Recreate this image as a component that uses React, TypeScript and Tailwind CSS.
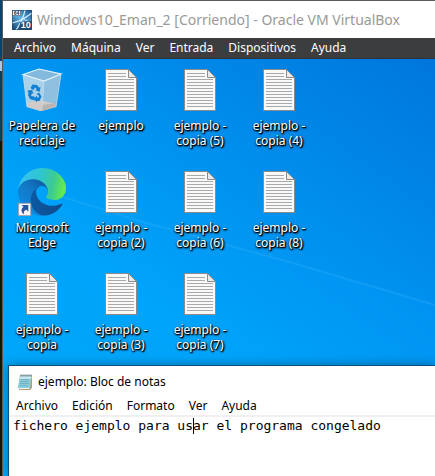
const hostMenu = ["Archivo", "Máquina", "Ver", "Entrada", "Dispositivos", "Ayuda"];
const notepadMenu = ["Archivo", "Edición", "Formato", "Ver", "Ayuda"];

type Kind = "bin" | "edge" | "text";
const icons: { kind: Kind; lines: string[] }[] = [
  { kind: "bin", lines: ["Papelera de", "reciclaje"] },
  { kind: "text", lines: ["ejemplo"] },
  { kind: "text", lines: ["ejemplo -", "copia (5)"] },
  { kind: "text", lines: ["ejemplo -", "copia (4)"] },
  { kind: "edge", lines: ["Microsoft", "Edge"] },
  { kind: "text", lines: ["ejemplo -", "copia (2)"] },
  { kind: "text", lines: ["ejemplo -", "copia (6)"] },
  { kind: "text", lines: ["ejemplo -", "copia (8)"] },
  { kind: "text", lines: ["ejemplo -", "copia"] },
  { kind: "text", lines: ["ejemplo -", "copia (3)"] },
  { kind: "text", lines: ["ejemplo -", "copia (7)"] },
];

function TextFileIcon() {
  return (
    <svg className="size-12" viewBox="0 0 48 48" aria-hidden="true">
      <path d="M8.5 3.5h23l8 8v33h-31z" fill="#f9f9f9" stroke="#8b8b8b" />
      <path d="M31.5 3.5v8h8z" fill="#e9eaec" stroke="#8b8b8b" />
      <path d="M11 7.5h18M11 10.5h18" stroke="#a9a9a9" />
      <path
        d="M11 13.5h26M11 16.5h26M11 19.5h26M11 22.5h26M11 25.5h26M11 28.5h26M11 31.5h26M11 34.5h26M11 37.5h26M11 40.5h26"
        stroke="#a9a9a9"
      />
    </svg>
  );
}

function BinIcon() {
  return (
    <svg className="size-12" viewBox="0 0 48 48" aria-hidden="true">
      <path d="M5 8.500 21 3l22 5-5 33-16 4-13-4z" fill="#a5cfe9" />
      <path d="M5 8.500 21 3l22 5-17 7z" fill="#82b9dc" />
      <path d="M26 15 43 8l-5 33-14 4z" fill="#8fc0df" />
      <path d="M5 8.500 26 15l-2 30-15-4z" fill="#a9d1ea" />
      <path d="M9 37l12-3 17 4-.5 3L23 45 9 41z" fill="#d0cbc9" />
      <path d="M24 39l14-2-.5 4L23.500 45z" fill="#b9b3b2" />
      <path d="M5 8.500 21 3l22 5-17 7z" fill="none" stroke="#e4f2fa" strokeWidth="1.200" />
      <path d="M5 9l4 32M43 9l-5 32M26 15l-2 29" fill="none" stroke="#c9e3f2" strokeWidth=".6" />
      <g fill="#1180d3">
        <path d="M12.500 22l2-3.500 4.500.5 2 2.500 1.500-.5-.8 4.700-4.500-1.500 1.500-1-1.500-2-2 3z" />
        <path d="M9.500 24.500l4.500-.5 1.500 4-1.500-.7-1 2.700 3.500.5v4l-4.500-1.500-2-4 .5-2z" />
        <path d="M21 26.500l2.500 4-2 4.500h-2.500v1.500l-3.500-4 3.500-2.700v1.700h1.500l.7-1.500-2.500-2z" />
      </g>
    </svg>
  );
}

function EdgeIcon() {
  return (
    <svg className="size-12" viewBox="0 0 256 256" aria-hidden="true">
      <defs>
        <linearGradient id="edgeNavy" x1="63" x2="241" y1="178" y2="178" gradientUnits="userSpaceOnUse">
          <stop offset="0" stopColor="#0c59a4" />
          <stop offset="1" stopColor="#114a8b" />
        </linearGradient>
        <linearGradient id="edgeBlue" x1="150" x2="45" y1="95" y2="212" gradientUnits="userSpaceOnUse">
          <stop offset="0" stopColor="#0f5fa8" />
          <stop offset=".4" stopColor="#1277c4" />
          <stop offset="1" stopColor="#0f86dc" />
        </linearGradient>
        <linearGradient id="edgeGreen" x1="10" x2="245" y1="60" y2="105" gradientUnits="userSpaceOnUse">
          <stop offset="0" stopColor="#35c1f1" />
          <stop offset=".45" stopColor="#2fc6cf" />
          <stop offset=".75" stopColor="#3ccb91" />
          <stop offset="1" stopColor="#66eb4e" />
        </linearGradient>
      </defs>
      <path
        fill="url(#edgeNavy)"
        d="M231 190.500c-3.400 1.800-6.900 3.400-10.500 4.700a101.500 101.500 0 0 1-35.900 6.500c-47.300 0-88.500-32.500-88.500-74.300 0-11.900 6.600-21.900 16.300-27.200-42.800 1.800-53.800 46.400-53.800 72.500 0 73.900 68.100 81.400 82.800 81.400 7.900 0 19.800-2.300 27-4.600l1.300-.4a128.300 128.300 0 0 0 66.600-52.800 4 4 0 0 0-5.300-5.800z"
      />
      <path
        fill="url(#edgeBlue)"
        d="M105.700 241.400a79.200 79.200 0 0 1-22.700-21.300 80.700 80.700 0 0 1 29.500-120c3.100-1.500 8.500-4.100 15.600-4a32.400 32.400 0 0 1 25.700 13 31.900 31.900 0 0 1 6.300 18.700c0-.2 24.500-79.600-80-79.600-43.900 0-80 41.600-80 78.200a130.200 130.200 0 0 0 12.100 56 128 128 0 0 0 156.400 67 75.500 75.500 0 0 1-62.800-8z"
      />
      <path
        fill="url(#edgeGreen)"
        d="M152.300 148.900c-.8 1-3.300 2.500-3.300 5.700 0 2.600 1.700 5.100 4.700 7.200 14.400 10 41.500 8.700 41.600 8.700a59.600 59.600 0 0 0 30.300-8.300 61.400 61.400 0 0 0 30.400-52.900c.3-22.400-8-37.300-11.300-43.900C223.500 23.900 177.700 0 128 0A128 128 0 0 0 0 126.200c.5-36.500 36.800-66 80-66 3.500 0 23.500.3 42 10 16.300 8.600 24.900 18.900 30.800 29.200 6.200 10.700 7.300 24.100 7.300 29.500s-2.700 13.300-7.800 20z"
      />
      <rect x="2" y="188" width="66" height="66" fill="#f6f6f6" stroke="#9a9a9a" strokeWidth="4" />
      <path fill="#2257a0" d="M19 197h36v36l-11-10c-12 5-15 14-12 25-17-12-17-29-3-41z" />
    </svg>
  );
}

function Windows10Icon() {
  return (
    <svg className="size-5 shrink-0" viewBox="0 0 20 20" aria-hidden="true">
      <defs>
        <linearGradient id="vmSky" x1="0" y1="1" x2="1" y2="0">
          <stop offset="0" stopColor="#123a60" />
          <stop offset=".5" stopColor="#5fb0e2" />
          <stop offset="1" stopColor="#1b4f82" />
        </linearGradient>
      </defs>
      <rect width="20" height="20" fill="url(#vmSky)" />
      <path d="M0 13C6 12 12 9 20 3M13 0C12 6 9 13 4 20" fill="none" stroke="#d6f1ff" strokeWidth="1.200" />
      <path d="M9 8l11 5" stroke="#c7e9fb" strokeWidth=".8" />
      <path d="M8.500 12 20 11v9H6.500z" fill="#26496e" />
      <rect x=".5" y=".5" width="8" height="5" fill="#fff" stroke="#555" strokeWidth=".6" />
      <text x="1.700" y="4.800" fontSize="5" fontWeight="700" fontFamily="Liberation Sans, sans-serif" fill="#222">
        64
      </text>
      <text x="8.800" y="18.300" fontSize="9" fontWeight="700" fontFamily="Liberation Sans, sans-serif" fill="#fff">
        10
      </text>
      <rect x=".5" y=".5" width="19" height="19" fill="none" stroke="#1c4a78" strokeOpacity=".5" />
    </svg>
  );
}

function NotepadIcon() {
  return (
    <svg className="size-4 shrink-0" viewBox="0 0 16 16" aria-hidden="true">
      <path d="M3 1.500h12v12L13.500 16H2z" fill="#b79f72" />
      <path d="M3 1.500h11.500L13 15H.5z" fill="#8ccbd8" />
      <path d="M3 1.500h11.500L14 5H2.500z" fill="#c3e8ee" />
      <path d="M3.500 5.500h8.500M3.200 7.500h8.500M3 9.500h8.500M2.700 11.500h8.500" stroke="#63aabd" strokeWidth=".7" />
      <path d="M1 14.500h11.500" stroke="#e8f6f8" />
      <path d="M4 .5v2M6 .5v2M8 .5v2M10 .5v2M12 .5v2M14 .5v2" stroke="#4b5b60" strokeWidth=".9" />
    </svg>
  );
}

function DesktopIcon({ kind, lines }: { kind: Kind; lines: string[] }) {
  return (
    <button type="button" className="flex flex-col items-center gap-1">
      {kind === "bin" ? <BinIcon /> : kind === "edge" ? <EdgeIcon /> : <TextFileIcon />}
      <span className="h-[30px] text-xs leading-[15px] whitespace-pre text-white [text-shadow:1px_1px_2px_#000,0_1px_2px_#000,1px_1px_1px_#000]">
        {lines.join("\n")}
      </span>
    </button>
  );
}

export default function App() {
  return (
    <div className="flex min-h-screen overflow-hidden font-['Noto_Sans','Open_Sans',sans-serif]">
      <div className="flex w-[2px] shrink-0 flex-col">
        <div className="h-[61px] bg-[#0b4468]" />
        <div className="h-[10px] bg-[#a9c6e6]" />
        <div className="h-[70px] bg-[#07405f]" />
        <div className="flex-1 bg-[#15130f]" />
      </div>
      <div className="flex min-w-0 flex-1 flex-col border-t border-l border-[#5b5b5f]">
        <header className="flex h-[37px] shrink-0 items-center gap-[5px] bg-white pl-[9px]">
          <Windows10Icon />
          <h1 className="text-[14px] leading-5 whitespace-nowrap text-[#999]">
            Windows10_Eman_2 [Corriendo] - Oracle VM VirtualBox
          </h1>
        </header>
        <nav className="flex h-[21px] shrink-0 items-center gap-[15px] border-b border-[#303234] bg-[#3c3d3f] pl-[11px] text-xs text-white">
          {hostMenu.map((item) => (
            <button type="button" key={item}>
              {item}
            </button>
          ))}
        </nav>
        <main className="relative isolate flex flex-1 flex-col overflow-hidden bg-[linear-gradient(35deg,#00a9fb_0%,#00a5f9_38%,#0091ef_64%,#0076dc_100%)]">
          <svg
            className="absolute inset-0 -z-10 h-full w-full"
            viewBox="0 0 432 417"
            preserveAspectRatio="none"
            aria-hidden="true"
          >
            <path d="M30 129 140 163 290 204 432 246V417H0V120z" fill="#00a4ff" opacity=".15" />
            <path d="M50 135 140 163 290 204 432 246" fill="none" stroke="#35b2ff" strokeWidth="2" opacity=".3" />
          </svg>
          <div className="grid grid-cols-[repeat(4,78px)] gap-x-px gap-y-5 pt-[7px]">
            {icons.map((icon) => (
              <DesktopIcon key={icon.lines.join(" ")} {...icon} />
            ))}
          </div>
          <section className="mt-[13px] ml-[5px] flex flex-1 flex-col border-t border-l border-[#0b4f80] bg-white text-black shadow-[0_0_10px_rgba(0,0,0,0.35)]">
            <header className="flex h-[31px] shrink-0 items-center gap-[5px] pl-2">
              <NotepadIcon />
              <h2 className="text-xs">ejemplo: Bloc de notas</h2>
            </header>
            <nav className="flex h-[18px] shrink-0 items-center gap-[14px] pl-[7px] text-xs">
              {notepadMenu.map((item) => (
                <button type="button" key={item}>
                  {item}
                </button>
              ))}
            </nav>
            <div className="relative flex flex-1 border-t-2 border-[#f0f0f0]">
              <textarea
                aria-label="Contenido de ejemplo"
                spellCheck={false}
                wrap="off"
                className="w-full flex-1 resize-none overflow-hidden pl-1 font-['DejaVu_Sans_Mono',monospace] text-[13px] leading-[17px] outline-none"
                defaultValue="fichero ejemplo para usar el programa congelado"
              />
              <span className="absolute top-px left-[184px] h-4 w-px bg-black" />
            </div>
          </section>
        </main>
      </div>
    </div>
  );
}
